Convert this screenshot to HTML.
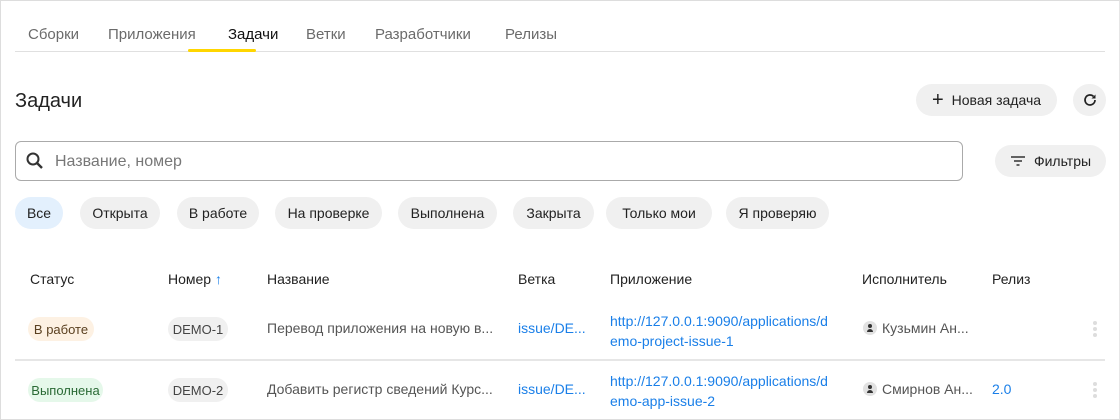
<!DOCTYPE html>
<html><head><meta charset="utf-8"><style>
*{box-sizing:border-box;margin:0;padding:0}
body{width:1120px;height:420px;background:#fff;font-family:"Liberation Sans",sans-serif;position:relative;overflow:hidden;color:#222}
.frame{position:absolute;left:0;top:0;width:1120px;height:420px;border:1px solid #ddd;border-right-color:#e6e6e6}
.a{position:absolute;white-space:nowrap}
.tab{position:absolute;top:26px;font-size:15px;color:#6b6b6b}
.pill{position:absolute;height:32px;border-radius:16px;background:#f0f0f0;font-size:14px;color:#222;display:flex;align-items:center;justify-content:center}
.th{position:absolute;top:271px;font-size:14px;color:#222;font-weight:500}
.badge{position:absolute;height:24px;border-radius:12px;font-size:13px;display:flex;align-items:center;justify-content:center}
.txt{position:absolute;font-size:14px;color:#555}
.lnk{position:absolute;font-size:14px;color:#1a7fe8}
.av{display:inline-block;width:14px;height:14px;border-radius:7px;background:#e2e2e2;vertical-align:-2px;margin-right:5px;position:relative}
.av:before{content:"";position:absolute;left:5px;top:3px;width:4px;height:4px;border-radius:2px;background:#333}
.av:after{content:"";position:absolute;left:4px;top:8px;width:6px;height:3px;border-radius:3px 3px 0 0;background:#333}
.dots{position:absolute;left:1093px;width:4px}
.dots i{display:block;width:4px;height:4px;border-radius:2px;background:#ddd;margin-bottom:2px}
</style></head><body>
<div class="frame"></div>
<div class="tab" style="left:28px">Сборки</div>
<div class="tab" style="left:108px">Приложения</div>
<div class="tab" style="left:228px;color:#111">Задачи</div>
<div class="tab" style="left:306px">Ветки</div>
<div class="tab" style="left:375px">Разработчики</div>
<div class="tab" style="left:505px">Релизы</div>
<div class="a" style="left:15px;top:51px;width:1090px;height:1px;background:#e0e0e0"></div>
<div class="a" style="left:188px;top:49px;width:68px;height:3px;background:#ffd600;border-radius:2px"></div>

<div class="a" style="left:15px;top:90px;font-size:20px;color:#222">Задачи</div>
<div class="pill" style="left:916px;top:84px;width:141px;font-size:14px"><span style="font-size:20px;margin-right:8px;font-weight:300">+</span>Новая задача</div>
<div class="pill" style="left:1073px;top:84px;width:33px">
<svg width="16" height="16" viewBox="0 0 16 16"><path d="M13 8a5 5 0 1 1-1.5-3.6" fill="none" stroke="#222" stroke-width="1.7"/><path d="M13.5 2.5v4h-4z" fill="#222"/></svg></div>

<div class="a" style="left:15px;top:141px;width:948px;height:40px;border:1px solid #aaa;border-radius:6px"></div>
<svg class="a" style="left:25px;top:151px" width="20" height="20" viewBox="0 0 20 20"><circle cx="8" cy="8" r="5.5" fill="none" stroke="#333" stroke-width="2"/><path d="M12 12l5 5" stroke="#333" stroke-width="2.4"/></svg>
<div class="a" style="left:55px;top:153px;font-size:16px;color:#777">Название, номер</div>
<div class="pill" style="left:995px;top:145px;width:111px"><svg width="16" height="12" viewBox="0 0 16 12" style="margin-right:8px"><path d="M1 2h14M4 6h8M6.5 10h3" stroke="#333" stroke-width="1.6"/></svg>Фильтры</div>

<div class="pill" style="left:15px;top:197px;width:48px;background:#e3f0fd">Все</div>
<div class="pill" style="left:80px;top:197px;width:80px">Открыта</div>
<div class="pill" style="left:177px;top:197px;width:82px">В работе</div>
<div class="pill" style="left:275px;top:197px;width:107px">На проверке</div>
<div class="pill" style="left:398px;top:197px;width:99px">Выполнена</div>
<div class="pill" style="left:513px;top:197px;width:81px">Закрыта</div>
<div class="pill" style="left:606px;top:197px;width:106px">Только мои</div>
<div class="pill" style="left:726px;top:197px;width:103px">Я проверяю</div>

<div class="th" style="left:30px">Статус</div>
<div class="th" style="left:168px">Номер <span style="color:#1a7fe8">&#8593;</span></div>
<div class="th" style="left:267px">Название</div>
<div class="th" style="left:518px">Ветка</div>
<div class="th" style="left:610px">Приложение</div>
<div class="th" style="left:862px">Исполнитель</div>
<div class="th" style="left:992px">Релиз</div>

<div class="badge" style="left:28px;top:317px;width:66px;background:#fdf1e3;color:#5a4020">В работе</div>
<div class="badge" style="left:168px;top:317px;width:60px;background:#f0f0f0;color:#444">DEMO-1</div>
<div class="txt" style="left:267px;top:320px">Перевод приложения на новую в...</div>
<div class="lnk" style="left:518px;top:320px">issue/DE...</div>
<div class="lnk" style="left:610px;top:311px;line-height:20px">http://127.0.0.1:9090/applications/d<br>emo-project-issue-1</div>
<div class="txt" style="left:863px;top:320px"><span class="av"></span>Кузьмин Ан...</div>
<div class="dots" style="top:321px"><i></i><i></i><i></i></div>
<div class="a" style="left:15px;top:359px;width:1090px;height:2px;background:#e6e6e6"></div>

<div class="badge" style="left:28px;top:378px;width:75px;background:#e5f8ea;color:#2a6a35">Выполнена</div>
<div class="badge" style="left:168px;top:378px;width:60px;background:#f0f0f0;color:#444">DEMO-2</div>
<div class="txt" style="left:267px;top:381px">Добавить регистр сведений Курс...</div>
<div class="lnk" style="left:518px;top:381px">issue/DE...</div>
<div class="lnk" style="left:610px;top:371px;line-height:20px">http://127.0.0.1:9090/applications/d<br>emo-app-issue-2</div>
<div class="txt" style="left:863px;top:381px"><span class="av"></span>Смирнов Ан...</div>
<div class="lnk" style="left:992px;top:381px">2.0</div>
<div class="dots" style="top:382px"><i></i><i></i><i></i></div>
</body></html>
